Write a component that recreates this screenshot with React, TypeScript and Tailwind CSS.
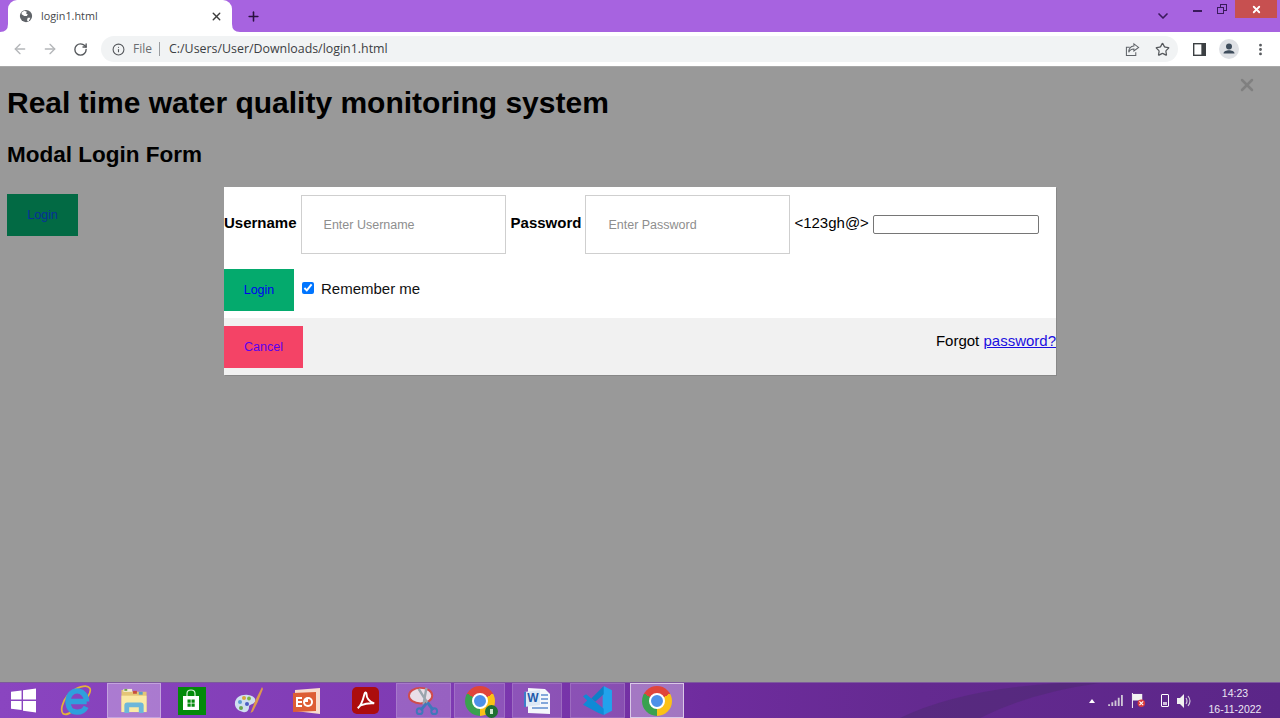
import { ArrowLeft, ArrowRight, ChevronDown, Info, MoreVertical, Plus, RotateCw, Star, X } from 'lucide-react'
import type { ReactNode } from 'react'

const sans = 'font-["Liberation_Sans",Arial,sans-serif]'

const Globe = () => (
  <svg viewBox="0 0 16 16" className="h-[14px] w-[14px]">
    <circle cx="8" cy="8" r="7" fill="#5f6368" />
    <path d="M3 4l3-2 3 1-1 2 2 1-1 2H6L3 6zM10 10h3l-2 4-2-1z" fill="#fff" />
  </svg>
)

const ShareIcon = () => (
  <svg viewBox="0 0 16 16" className="h-[15px] w-[15px]" fill="none" stroke="#5f6368" strokeWidth="1.1">
    <path d="M5 5.5H1.5v9h10V11" />
    <path d="M9.5 2l5 3.8-5 3.8V7.4C7 7.4 5 8.5 4 11c0-3.600 2-6.500 5.500-6.800z" />
  </svg>
)

const SidePanelIcon = () => (
  <svg viewBox="0 0 14 14" className="h-[13px] w-[13px]">
    <rect x="0" y="0" width="14" height="14" fill="#3c4043" />
    <rect x="1.500" y="1.500" width="7.500" height="11" fill="#fff" />
  </svg>
)

const Profile = () => (
  <svg viewBox="0 0 20 20" className="h-[20px] w-[20px]">
    <circle cx="10" cy="10" r="10" fill="#dfe1e5" />
    <circle cx="10" cy="7.500" r="3" fill="#3f4d5c" />
    <path d="M4.500 14.500c0-2.200 3-3.200 5.500-3.200s5.500 1 5.500 3.200z" fill="#3f4d5c" />
  </svg>
)

const WindowsLogo = () => (
  <svg viewBox="0 0 26 26" className="h-[25px] w-[25px]" fill="#fff">
    <path d="M0 4l11-1.500V12H0zM12.500 2.300L26 .5V12H12.500zM0 13.500h11V23L0 21.500zM12.500 13.500H26V25.500L12.500 23.700z" />
  </svg>
)

const IeLogo = () => (
  <svg viewBox="0 0 30 30" className="h-[32px] w-[32px]" fill="none">
    <path d="M7 10C2 16 0 24 3 27c3 2 7-1 11-4M14 4c6-3 12-4 14-1 1 2 0 5-2 8" stroke="#e2b33a" strokeWidth="1.600" />
    <path d="M25 15.500H8M7.500 15.500c0-6 4-10 8.500-10s9 4 9 10M24.500 20.500c-1.500 3-5 5-8.500 5-5 0-8.500-4-8.500-10" stroke="#2f9fdd" strokeWidth="5" />
  </svg>
)

const ExplorerLogo = () => (
  <svg viewBox="0 0 30 28" className="h-[27px] w-[30px]">
    <path d="M2 3h10l2 2h14v21H2z" fill="#e4c676" />
    <rect x="4" y="2" width="9" height="3" fill="#f4eed8" />
    <rect x="5" y="2" width="3" height="2" fill="#6ea34e" />
    <rect x="14" y="4" width="4" height="3" fill="#c8503c" />
    <rect x="20" y="5" width="4" height="3" fill="#5aa0c8" />
    <rect x="2" y="9" width="26" height="17" fill="#fbeaa6" />
    <path d="M5 27v-8q0-3 3-3h14q3 0 3 3v8h-5v-6H10v6z" fill="#6db7da" />
  </svg>
)

const StoreLogo = () => (
  <svg viewBox="0 0 28 28" className="h-[28px] w-[28px]">
    <rect width="28" height="28" fill="#038a0a" />
    <path d="M5 9h16v14H5z" fill="#fff" />
    <path d="M9 9V6.500Q9 3 13 3t4 3.500V9" fill="none" stroke="#d9f0d9" strokeWidth="1.200" />
    <path d="M9.500 12.500h3.200v3.200H9.500zM13.500 12.500h3.200v3.200h-3.200zM9.500 16.500h3.200v3.200H9.500zM13.500 16.500h3.200v3.200h-3.200z" fill="#038a0a" />
  </svg>
)

const PaintLogo = () => (
  <svg viewBox="0 0 30 30" className="h-[30px] w-[30px]">
    <path d="M1 19C0 12 7 8 14 9c7 1 9 5 6 8-2 2-5 1-5 4s-2 6-6 5-7-3-8-7z" fill="#cfe0f0" />
    <circle cx="6" cy="16" r="2" fill="#5b9bd5" />
    <circle cx="10" cy="12" r="2" fill="#d9a63c" />
    <circle cx="15" cy="12.500" r="1.900" fill="#7cb342" />
    <circle cx="13" cy="18" r="2" fill="#4a5fc4" />
    <circle cx="7" cy="22" r="2" fill="#6aa84f" />
    <path d="M28 1l-6 12-4 10-1.500 4 2.500-1.500 4.500-9L29 3z" fill="#de9a4c" />
  </svg>
)

const SlidesLogo = () => (
  <svg viewBox="0 0 30 28" className="h-[28px] w-[30px]">
    <path d="M3 3l25-2v26L3 24z" fill="#f8dccd" />
    <path d="M1 6l23-1v19L1 25z" fill="#dd5e35" />
    <path d="M4 10h6v2H6v2h4v2H6v2h4v2H4z" fill="#fff" />
    <circle cx="16" cy="15" r="5" fill="#fff" />
    <path d="M16 15v-3a3 3 0 1 1-3 3z" fill="#dd5e35" />
  </svg>
)

const AcrobatLogo = () => (
  <svg viewBox="0 0 28 28" className="h-[27px] w-[27px]">
    <rect width="28" height="28" rx="5" fill="#ac0d0d" />
    <path d="M6 22c3-2 5-7 7-15 .500-2 2-1.500 2 0 0 4 3 8 8 10-6-.500-10 .500-14 2-1 .500-2 2-3 3z" fill="none" stroke="#fff" strokeWidth="2" />
  </svg>
)

const SnipLogo = () => (
  <svg viewBox="0 0 34 34" className="h-[33px] w-[33px]">
    <ellipse cx="14" cy="12" rx="12" ry="8" fill="#e9dfe8" stroke="#d04c4c" strokeWidth="2" />
    <path d="M12 5l10 16M20 4l-3 17" stroke="#9aa5ad" strokeWidth="2.500" />
    <path d="M20 20l-6 7" stroke="#3f78ba" strokeWidth="3" />
    <path d="M21 19l6 8" stroke="#3f78ba" strokeWidth="3" />
    <circle cx="13" cy="28" r="3" fill="none" stroke="#3f78ba" strokeWidth="2" />
    <circle cx="28" cy="28" r="3" fill="none" stroke="#3f78ba" strokeWidth="2" />
  </svg>
)

const ChromeLogo = ({ badge }: { badge?: boolean }) => (
  <div className="relative h-[30px] w-[30px]">
    <div className="h-full w-full rounded-full bg-[conic-gradient(from_60deg,#fbc116_0deg_120deg,#3aa14f_120deg_240deg,#e0453a_240deg_360deg)]" />
    <div className="absolute top-[7px] left-[7px] h-[16px] w-[16px] rounded-full border-[2.500px] border-white bg-[#4d90e8]" />
    {badge && (
      <div className="absolute right-[-3px] bottom-[-2px] flex h-[13px] w-[13px] items-center justify-center rounded-full bg-[#1f6f33]">
        <div className="h-[5px] w-[3px] bg-[#cfe8d0]" />
      </div>
    )}
  </div>
)

const WordLogo = () => (
  <svg viewBox="0 0 30 30" className="h-[30px] w-[30px]">
    <path d="M6 2l17 1 5 5v20l-22-1z" fill="#f4f7fb" />
    <path d="M2 6l16-2v15L2 21z" fill="#dce8f6" />
    <path d="M2 6l2-.3V21l-2 0z" fill="#3d7cc9" />
    <text x="11" y="16" textAnchor="middle" fontSize="12" fontWeight="700" fill="#1f5bab" fontFamily="Liberation Sans">W</text>
    <path d="M19 9h7M19 13h7M19 17h7M10 22h16" stroke="#5f8fcf" strokeWidth="1.500" />
  </svg>
)

const VsCodeLogo = () => (
  <svg viewBox="0 0 30 30" className="h-[31px] w-[31px]">
    <path d="M21 1l8 4v20l-8 4-1-3V4z" fill="#22a2ec" />
    <path d="M21 1L9 13l4 3 8-7z" fill="#0d7fc7" />
    <path d="M1 11l3-2 17 14v6l-5-2L1 19l4-4z" fill="#0f8ad6" />
  </svg>
)

const TaskSlot = ({ className, children }: { className: string; children: ReactNode }) => (
  <div className={`flex h-full shrink-0 items-center justify-center ${className}`}>{children}</div>
)

const App = () => {
  return (
    <div className={`flex h-screen w-[1280px] flex-col overflow-hidden bg-[#999999] ${sans}`}>
      {/* tab strip */}
      <div className="flex h-[32px] shrink-0 items-center bg-[#a763e0]">
        <div className="relative ml-[8px] flex h-full w-[224px] items-center rounded-t-[9px] bg-white pr-[9px] pl-[11px]">
          <svg viewBox="0 0 8 8" className="absolute bottom-0 left-[-8px] h-[8px] w-[8px]" fill="#fff">
            <path d="M8 0v8H0q8 0 8-8z" />
          </svg>
          <svg viewBox="0 0 8 8" className="absolute right-[-8px] bottom-0 h-[8px] w-[8px]" fill="#fff">
            <path d="M0 0v8h8q-8 0-8-8z" />
          </svg>
          <Globe />
          <span className="ml-[8px] flex-1 font-['Open_Sans',sans-serif] text-[10.800px] text-[#45474a]">login1.html</span>
          <X size={13} strokeWidth={2.500} className="text-[#3c3c3c]" />
        </div>
        <Plus size={15} strokeWidth={2.500} className="ml-[14px] text-[#2a1140]" />
        <div className="flex-1" />
        <ChevronDown size={16} strokeWidth={2.500} className="mr-[22px] text-[#3a1a5c]" />
        <div className="flex h-full items-start">
          <div className="mt-[10px] h-[2px] w-[9px] bg-[#3a1a5c]" />
          <div className="relative mt-[4px] ml-[15px] h-[10px] w-[10px]">
            <div className="absolute top-0 right-0 h-[7px] w-[7px] border border-[#3a1a5c]" />
            <div className="absolute bottom-0 left-0 h-[7px] w-[7px] border border-[#3a1a5c] bg-[#a763e0]" />
          </div>
          <div className="ml-[8px] mr-[3px] flex h-[18px] w-[42px] items-center justify-center bg-[#c75050]">
            <X size={11} strokeWidth={4} className="text-white" />
          </div>
        </div>
      </div>

      {/* toolbar */}
      <div className="flex h-[34px] shrink-0 items-center bg-white pl-[12px]">
        <ArrowLeft size={16} strokeWidth={2} className="text-[#b4b6b9]" />
        <ArrowRight size={16} strokeWidth={2} className="ml-[14px] text-[#b4b6b9]" />
        <RotateCw size={15} strokeWidth={2.200} className="ml-[15px] text-[#55585c]" />
        <div className="ml-[13px] flex h-[26px] w-[1077px] items-center rounded-full bg-[#f1f3f4] pr-[8px] pl-[11px]">
          <Info size={13} strokeWidth={2} className="text-[#55585c]" />
          <span className="ml-[8px] font-['Open_Sans',sans-serif] text-[12px] text-[#6a6d70]">File</span>
          <div className="ml-[7px] h-[14px] w-px bg-[#9a9da0]" />
          <span className="ml-[9px] font-['Open_Sans',sans-serif] text-[12.400px] text-[#3c4043]">C:/Users/User/Downloads/login1.html</span>
          <div className="flex-1" />
          <ShareIcon />
          <Star size={15} strokeWidth={2} className="ml-[15px] text-[#55585c]" />
        </div>
        <div className="ml-[15px]"><SidePanelIcon /></div>
        <div className="ml-[13px]"><Profile /></div>
        <MoreVertical size={15} strokeWidth={2.500} className="ml-[14px] text-[#55585c]" />
      </div>

      {/* page */}
      <div className="relative flex-1 border-t border-[#a8a8a8] pl-[7px]">
        <h1 className="mt-[18px] text-[30px] leading-[36px] font-bold text-black">Real time water quality monitoring system</h1>
        <h2 className="mt-[21px] text-[22.500px] leading-[26px] font-bold text-black">Modal Login Form</h2>
        <button className="mt-[26px] flex h-[42px] w-[71px] items-center justify-center bg-[#026a44] text-[12.500px] text-[#06309a]">Login</button>

        <X size={20} strokeWidth={3} className="absolute top-[8px] right-[23px] text-[#808080]" />

        {/* modal */}
        <div className="absolute top-[120px] left-[224px] w-[832px] bg-white text-[15px] text-black shadow-[1px_1px_0_#888888]">
          <div className="flex items-center pt-[8px]">
            <label className="pb-[2px] font-bold">Username</label>
            <input placeholder="Enter Username" className="ml-[4px] h-[59px] w-[205px] border border-[#cfcfcf] pl-[22px] text-[12.500px] placeholder:text-[#8e8e8e]" />
            <label className="ml-[5px] pb-[2px] font-bold">Password</label>
            <input placeholder="Enter Password" className="ml-[4px] h-[59px] w-[205px] border border-[#cfcfcf] pl-[22px] text-[12.500px] placeholder:text-[#8e8e8e]" />
            <span className="ml-[4px] pb-[2px]">&lt;123gh@&gt;</span>
            <input className="ml-[4px] h-[19px] w-[166px] rounded-[2px] border border-[#767676]" />
          </div>
          <div className="mt-[15px] flex h-[42px] items-center">
            <button className="h-full w-[70px] bg-[#04aa6d] text-[12.500px] text-[#0000ee]">Login</button>
            <input type="checkbox" defaultChecked className="mb-[4px] ml-[8px] h-[12px] w-[12px]" />
            <span className="ml-[7px] pb-[2px] text-[#111]">Remember me</span>
          </div>
          <div className="mt-[7px] flex h-[57px] items-start justify-between bg-[#f1f1f1] pt-[8px]">
            <button className="h-[42px] w-[79px] bg-[#f44366] text-[12.500px] text-[#5a00ee]">Cancel</button>
            <span className="mt-[4px]">Forgot <a href="#" className="text-[#1a0fe0] underline">password?</a></span>
          </div>
        </div>
      </div>

      {/* taskbar */}
      <div className="relative flex h-[36px] shrink-0 items-center border-t border-[#7d5a9c] bg-[linear-gradient(90deg,#8a45c0_0%,#7e3ab2_35%,#6f2c9e_55%,#642a90_72%,#5b2688_100%)]">
        <svg viewBox="0 0 1280 36" preserveAspectRatio="none" className="absolute inset-0 h-full w-full">
          <path d="M900 36Q960 6 1060 0H1100Q1030 10 980 36z" fill="#4f2a72" opacity="0.55" />
        </svg>
        <TaskSlot className="relative w-[47px]"><WindowsLogo /></TaskSlot>
        <TaskSlot className="relative w-[58px]"><IeLogo /></TaskSlot>
        <TaskSlot className="relative ml-[2px] w-[54px] border border-white/30 bg-white/30"><ExplorerLogo /></TaskSlot>
        <TaskSlot className="relative ml-[3px] w-[56px]"><StoreLogo /></TaskSlot>
        <TaskSlot className="relative w-[58px]"><PaintLogo /></TaskSlot>
        <TaskSlot className="relative w-[58px]"><SlidesLogo /></TaskSlot>
        <TaskSlot className="relative w-[58px]"><AcrobatLogo /></TaskSlot>
        <TaskSlot className="relative ml-[2px] w-[55px] border border-white/15 bg-white/20"><SnipLogo /></TaskSlot>
        <TaskSlot className="relative ml-[3px] w-[51px] border border-white/15 bg-white/15"><ChromeLogo badge /></TaskSlot>
        <TaskSlot className="relative ml-[7px] w-[50px] border border-white/15 bg-white/15"><WordLogo /></TaskSlot>
        <TaskSlot className="relative ml-[8px] w-[55px] border border-white/15 bg-white/15"><VsCodeLogo /></TaskSlot>
        <TaskSlot className="relative ml-[5px] w-[54px] border border-white/60 bg-white/35"><ChromeLogo /></TaskSlot>
        <div className="flex-1" />
        <div className="relative h-0 w-0 border-x-[3px] border-b-[4px] border-x-transparent border-b-white" />
        <svg viewBox="0 0 16 12" className="relative ml-[13px] h-[11px] w-[15px]" fill="#cfc7d6">
          <path d="M0 10h2v2H0zM3.500 8h2v4h-2zM7 6h2v6H7zM10.500 3h2v9h-2zM14 0h2v12h-2z" />
        </svg>
        <svg viewBox="0 0 16 16" className="relative ml-[8px] h-[15px] w-[15px]">
          <path d="M1 0h1v16H1z" fill="#fff" />
          <path d="M2 1h10v7H2z" fill="#f2f2f2" />
          <circle cx="11" cy="11" r="4" fill="#dc3b3b" />
          <path d="M9 9l4 4M13 9l-4 4" stroke="#fff" strokeWidth="1.200" />
        </svg>
        <div className="relative ml-[15px] flex h-[13px] w-[8px] items-end rounded-[1px] border border-white p-px">
          <div className="h-[3px] w-full bg-white/70" />
        </div>
        <svg viewBox="0 0 16 14" className="relative ml-[7px] h-[14px] w-[16px]">
          <path d="M1 4h3l4-4v14l-4-4H1z" fill="#f0f0f0" />
          <path d="M10 4q2 3 0 6M12 2q4 5 0 10" fill="none" stroke="#d8d0e0" strokeWidth="1.100" />
        </svg>
        <div className="relative mr-[18px] ml-[16px] flex w-[54px] flex-col items-center pt-[1px] text-[10.500px] leading-[16px] text-[#ece6f2]">
          <span>14:23</span>
          <span>16-11-2022</span>
        </div>
      </div>
    </div>
  )
}

export default App
